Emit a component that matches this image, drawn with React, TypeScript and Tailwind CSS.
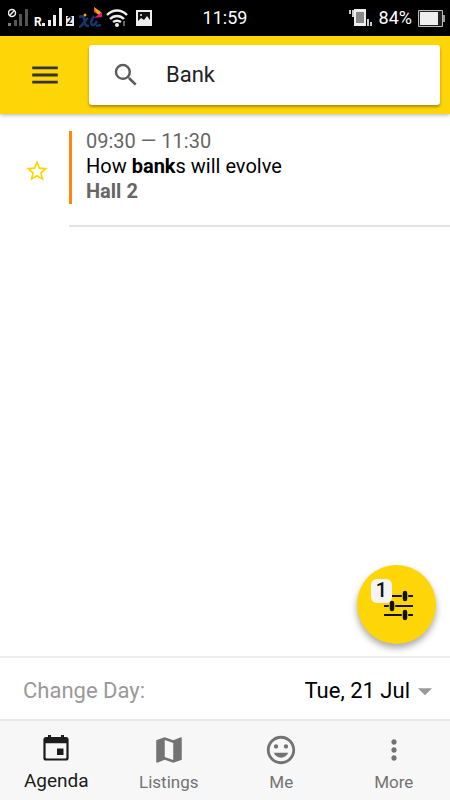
import React from 'react';
import {
  MdArrowDropDown,
  MdInsertEmoticon,
  MdMap,
  MdMenu,
  MdMoreVert,
  MdSearch,
  MdStarBorder,
} from 'react-icons/md';
import classNames from 'clsx';

type Session = {
  id: number;
  start: string;
  end: string;
  title: string;
  room: string;
};

const SESSIONS: Session[] = [
  {
    id: 1,
    start: '09:30',
    end: '11:30',
    title: 'How banks will evolve',
    room: 'Hall 2',
  },
];

const DAYS = ['Tue, 21 Jul', 'Wed, 22 Jul', 'Thu, 23 Jul'];

const CalendarIcon = () => (
  <svg viewBox="0 0 26 26" className="w-[26px] h-[26px]" fill="currentColor">
    <path
      fillRule="evenodd"
      d="M5 0h3v2h10V0h3v2h2a2.6 2.6 0 0 1 2.6 2.6v18.3a2.6 2.6 0 0 1-2.6 2.6H3A2.6 2.6 0 0 1 .4 22.9V4.6A2.6 2.6 0 0 1 3 2h2zM2.6 8.300v14.300a.8.8 0 0 0 .8.8h19.200a.8.8 0 0 0 .8-.8V8.300z"
    />
    <path d="M14 13.500h6.500V20H14z" />
  </svg>
);

const FilterIcon = () => (
  <svg viewBox="0 0 32 32" className="w-8 h-8" stroke="#111">
    <path d="M3 7h29M3 17h29M3 26h29" strokeWidth="2" />
    <path d="M24 2v10M11 12v10M24 21v10" stroke="#fed607" strokeWidth="6.500" />
    <path
      d="M24 4v6M11 14v6M24 23v6"
      strokeWidth="4.500"
      strokeLinecap="round"
    />
  </svg>
);

const StatusBar = () => (
  <div className="flex items-center justify-between h-9 pl-2 pr-1 bg-black text-white">
    <div className="flex flex-1 items-center">
      <svg viewBox="0 0 20 20" className="w-5 h-5" fill="#555">
        <path d="M0 15h3v3H0z" fill="#777" />
        <path d="M6 12h3v6H6zM11 6h3v12h-3zM17 1h3v17h-3z" />
        <circle cx="4" cy="5" r="3.500" fill="none" stroke="#eee" strokeWidth="1.500" />
        <path d="M1.500 7.500l5-5" stroke="#eee" strokeWidth="1.500" />
      </svg>
      <span className="ml-1.5 mt-2 text-xs leading-3 font-bold">R</span>
      <svg viewBox="0 0 20 20" className="w-5 h-5" fill="#eee">
        <path d="M0 15h3v3H0zM6 12h3v6H6zM11 7h3v11h-3zM17 0h3v18h-3z" />
      </svg>
      <span className="ml-1 mt-1.5 w-2 h-2.5 bg-[#eee] text-black text-[10px] leading-[10px] font-bold text-center">
        2
      </span>
      <svg viewBox="0 0 24 22" className="ml-1 w-6 h-[22px]" fill="none">
        <path
          d="M1 10c5-2 5 1 6 5 0 3 1 4 4 4M1 20c4-1 6-7 9-9M16 9c-3 4-4 9-1 9 2 0 3-2 4-4M18 19l5-1"
          stroke="#12386f"
          strokeWidth="2.600"
        />
        <circle cx="7" cy="8" r="1.500" fill="#f4a51c" />
        <path d="M16 0l7 5-1 4-5-4z" fill="#f9a51a" />
        <path d="M24 5v5l-8 1z" fill="#e5177b" />
        <path d="M16 0l3 6-3-1z" fill="#ef5b24" />
      </svg>
      <svg
        viewBox="0 0 24 20"
        className="ml-1 w-6 h-5"
        fill="none"
        stroke="#eee"
        strokeWidth="2.400">
        <path d="M1 7c6-6 14-6 20 0M4 11c4-4 10-4 14 0M7 14c3-2 5-2 8 0" />
        <circle cx="11" cy="17" r="2" fill="#eee" stroke="none" />
        <path d="M18 13v5" stroke="#666" strokeWidth="2" />
      </svg>
      <svg viewBox="0 0 16 16" className="ml-1.5 w-4 h-4">
        <path d="M0 0h16v16H0z" fill="#eee" />
        <path d="M2 2h12v8l-3-4-3 4-3-2-3 3z" fill="#111" />
        <circle cx="5" cy="5" r="1" fill="#eee" />
      </svg>
    </div>
    <span className="pr-1 text-lg leading-6">11:59</span>
    <div className="flex flex-1 items-center justify-end">
      <svg viewBox="0 0 24 20" className="mr-1.5 w-6 h-5">
        <path d="M0 2h2v4H0zM3 2h2v7H3zM18 11h2v7h-2zM21 14h2v4h-2z" fill="#ccc" />
        <path d="M5 1h12v17H5z" fill="#eee" />
        <path d="M7 4h8v11H7z" fill="#888" />
      </svg>
      <span className="text-lg leading-6">84%</span>
      <svg viewBox="0 0 28 17" className="ml-1.5 w-7 h-[17px]">
        <path d="M.5.5h24v16H.5z" fill="#222" stroke="#bbb" />
        <path d="M2 2h18v13H2z" fill="#eee" />
        <path d="M25 5h2v7h-2z" fill="#999" />
      </svg>
    </div>
  </div>
);

type HeaderProps = {
  query: string;
  onSearch: (value: string) => void;
};

const Header = ({ query, onSearch }: HeaderProps) => (
  <header className="relative flex items-center h-[78px] pl-7 pr-2.5 bg-[#fed607] shadow-[0_1px_4px_rgba(0,0,0,0.3)]">
    <button aria-label="Open menu" className="shrink-0 text-[#333]">
      <MdMenu className="w-[34px] h-[34px]" />
    </button>
    <label className="flex flex-1 min-w-0 items-center h-[60px] ml-[27px] pl-[22px] rounded-[3px] bg-white shadow-[0_2px_3px_rgba(0,0,0,0.35)]">
      <MdSearch className="w-[30px] h-[30px] shrink-0 text-[#5b5b5b]" />
      <input
        type="text"
        aria-label="Search sessions"
        value={query}
        onChange={(e) => onSearch(e.target.value)}
        className="flex-1 min-w-0 ml-[25px] text-[22px] leading-7 text-[#222] outline-none"
      />
    </label>
  </header>
);

// bolds the part of the title that matches the search
const Highlight = ({ text, query }: { text: string; query: string }) => {
  const index = text.toLowerCase().indexOf(query.toLowerCase());
  if (!query || index < 0) return <>{text}</>;
  return (
    <>
      {text.slice(0, index)}
      <b>{text.slice(index, index + query.length)}</b>
      {text.slice(index + query.length)}
    </>
  );
};

const SessionRow = ({ item, query }: { item: Session; query: string }) => (
  <li className="flex">
    <button
      aria-label="Add to favourites"
      className="flex w-[69px] items-center justify-center pl-1 text-[#fed607]">
      <MdStarBorder className="w-[26px] h-[26px]" />
    </button>
    <div className="flex-1 pt-[17px] pb-[21px] border-b-2 border-[#e4e4e4]">
      <div className="pl-3.5 border-l-[3px] border-[#ff8410] text-[20px] leading-[25px]">
        <p className="mb-[3px] leading-5 text-[#666]">
          {item.start} — {item.end}
        </p>
        <p className="text-black">
          <Highlight text={item.title} query={query} />
        </p>
        <p className="font-bold text-[#666]">{item.room}</p>
      </div>
    </div>
  </li>
);

const TABS = [
  { label: 'Agenda', icon: <CalendarIcon /> },
  { label: 'Listings', icon: <MdMap className="w-[34px] h-[34px]" /> },
  { label: 'Me', icon: <MdInsertEmoticon className="w-[34px] h-[34px]" /> },
  { label: 'More', icon: <MdMoreVert className="w-8 h-8" /> },
];

const App = () => {
  const [query, setQuery] = React.useState('Bank');
  const [day, setDay] = React.useState(DAYS[0]);
  const [tab, setTab] = React.useState('Agenda');

  const sessions = SESSIONS.filter((s) =>
    s.title.toLowerCase().includes(query.toLowerCase())
  );

  return (
    <div className="flex flex-col min-h-screen bg-white font-[Roboto,sans-serif]">
      <StatusBar />
      <Header query={query} onSearch={setQuery} />
      <main className="relative flex-1">
        <ul>
          {sessions.map((item) => (
            <SessionRow key={item.id} item={item} query={query} />
          ))}
        </ul>
        <button
          aria-label="Filters, 1 active"
          className="absolute right-3.5 bottom-3 flex items-center justify-center w-[79px] h-[79px] rounded-full bg-[#fed607] shadow-[0_4px_7px_rgba(0,0,0,0.35)]">
          <FilterIcon />
          <span className="absolute left-3.5 top-3.5 w-[21px] h-6 rounded-md bg-[#f4f4f4] text-xl leading-[22px] font-medium text-[#111]">
            1
          </span>
        </button>
      </main>
      <div className="flex items-center justify-between h-[63px] pt-1 pl-[23px] pr-2 border-t-2 border-[#eee] text-[22px] leading-7">
        <label htmlFor="day" className="text-[#999]">
          Change Day:
        </label>
        <div className="flex items-center">
          <select
            id="day"
            value={day}
            onChange={(e) => setDay(e.target.value)}
            className="appearance-none field-sizing-content text-black outline-none">
            {DAYS.map((d) => (
              <option key={d}>{d}</option>
            ))}
          </select>
          <MdArrowDropDown className="-ml-0.5 w-[34px] h-[34px] text-[#999] pointer-events-none" />
        </div>
      </div>
      <nav className="grid grid-cols-4 h-[81px] border-t-2 border-[#eaeaea] bg-[#f7f7f7]">
        {TABS.map(({ label, icon }) => (
          <button
            key={label}
            onClick={() => setTab(label)}
            className={classNames(
              'flex flex-col items-center',
              tab === label
                ? 'gap-1 pt-2.5 text-[#1c1c1c] text-[19px]'
                : 'gap-[3px] pt-3 text-[#737373] text-[17px]'
            )}>
            <span className="flex items-center justify-center h-[34px]">
              {icon}
            </span>
            <span className="leading-6">{label}</span>
          </button>
        ))}
      </nav>
    </div>
  );
};

export default App;
